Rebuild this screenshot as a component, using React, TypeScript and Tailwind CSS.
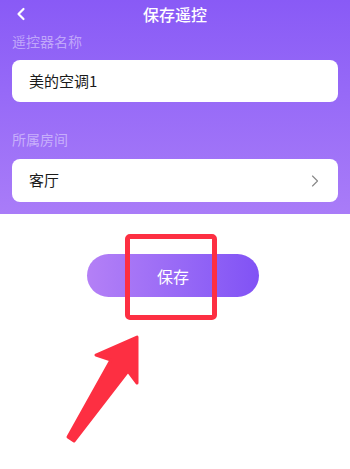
import { ChevronLeft, ChevronRight } from "lucide-react";

export default function App() {
  return (
    <div
      className="relative h-[469px] w-[350px] overflow-hidden bg-white"
      style={{ fontFamily: '"Noto Sans CJK SC", "Noto Sans", sans-serif' }}
    >
      <div className="h-[214px] bg-gradient-to-b from-[#895af6] to-[#a97cf8] px-3">
        <div className="grid h-[28px] grid-cols-[40px_1fr_40px] items-center">
          <ChevronLeft className="ml-[-1px] h-[20px] w-[20px] text-white" strokeWidth={2.6} />
          <h1 className="text-center text-[16px] font-medium leading-[28px] text-white">
            保存遥控
          </h1>
          <span />
        </div>

        <p className="mt-[4px] text-[14px] leading-[18px] text-white/45">遥控器名称</p>
        <div className="mt-[10px] flex h-[42px] items-center rounded-[8px] bg-white px-[17px]">
          <span className="text-[15px] text-[#1a1a1a]">美的空调1</span>
        </div>

        <p className="mt-[28px] text-[14px] leading-[18px] text-white/45">所属房间</p>
        <div className="mt-[11px] flex h-[43px] items-center justify-between rounded-[8px] bg-white pl-[17px] pr-[13px]">
          <span className="text-[15px] text-[#1a1a1a]">客厅</span>
          <ChevronRight className="h-[20px] w-[20px] text-[#8a8a8a]" strokeWidth={1.4} />
        </div>
      </div>

      <div className="mt-[40px] flex justify-center">
        <button className="ml-[-4px] flex h-[43px] w-[172px] items-center justify-center rounded-full bg-gradient-to-r from-[#b480f6] to-[#8152f5] text-[16px] text-white">
          保存
        </button>
      </div>

      {/* annotation overlay */}
      <div className="absolute left-[125px] top-[234px] h-[86px] w-[92px] rounded-[5px] border-[5px] border-[#fd2f42]" />
      <svg
        className="pointer-events-none absolute left-0 top-0"
        width="350"
        height="469"
        viewBox="0 0 350 469"
      >
        <polygon
          points="137,337 137,383 128,371 74,441 68,437 111,360 96,355"
          fill="#fd2f42"
          stroke="#fd2f42"
          strokeWidth="3"
          strokeLinejoin="round"
        />
      </svg>
    </div>
  );
}
